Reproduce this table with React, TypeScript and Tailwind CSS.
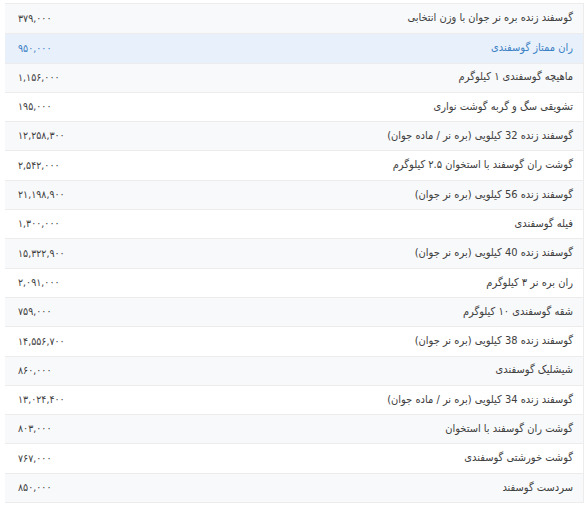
import React from "react";

const rows: [string, string][] = [
  ["گوسفند زنده بره نر جوان با وزن انتخابی", "۳۷۹,۰۰۰"],
  ["ران ممتاز گوسفندی", "۹۵۰,۰۰۰"],
  ["ماهیچه گوسفندی ۱ کیلوگرم", "۱,۱۵۶,۰۰۰"],
  ["تشویقی سگ و گربه گوشت نواری", "۱۹۵,۰۰۰"],
  ["گوسفند زنده 32 کیلویی (بره نر / ماده جوان)", "۱۲,۲۵۸,۳۰۰"],
  ["گوشت ران گوسفند با استخوان ۲.۵ کیلوگرم", "۲,۵۴۲,۰۰۰"],
  ["گوسفند زنده 56 کیلویی (بره نر جوان)", "۲۱,۱۹۸,۹۰۰"],
  ["فیله گوسفندی", "۱,۳۰۰,۰۰۰"],
  ["گوسفند زنده 40 کیلویی (بره نر جوان)", "۱۵,۳۲۲,۹۰۰"],
  ["ران بره نر ۳ کیلوگرم", "۲,۰۹۱,۰۰۰"],
  ["شقه گوسفندی ۱۰ کیلوگرم", "۷۵۹,۰۰۰"],
  ["گوسفند زنده 38 کیلویی (بره نر جوان)", "۱۴,۵۵۶,۷۰۰"],
  ["شیشلیک گوسفندی", "۸۶۰,۰۰۰"],
  ["گوسفند زنده 34 کیلویی (بره نر / ماده جوان)", "۱۳,۰۲۴,۴۰۰"],
  ["گوشت ران گوسفند با استخوان", "۸۰۳,۰۰۰"],
  ["گوشت خورشتی گوسفندی", "۷۶۷,۰۰۰"],
  ["سردست گوسفند", "۸۵۰,۰۰۰"],
];

export default function App() {
  return (
    <div className="w-[585px] h-[507px] bg-white pt-[3px] pl-[5px] pr-[1px] overflow-hidden">
      <div
        dir="rtl"
        className="border-t border-r border-b border-[#ececec] text-[11px] text-[#3d3d3d]"
        style={{ fontFamily: '"DejaVu Sans Condensed", "DejaVu Sans", sans-serif' }}
      >
        {rows.map(([name, price], i) => {
          const hl = i === 1;
          const bg = hl ? "bg-[#e8f1fb]" : i % 2 === 0 ? "bg-[#f8f9fa]" : "bg-white";
          return (
            <div
              key={i}
              className={`flex items-center justify-between h-[29.3px] pr-[10px] pl-[13px] border-t border-[#ececec] first:border-t-0 ${bg} ${hl ? "text-[#3b7fc4]" : ""}`}
            >
              <span>{name}</span>
              <span className="text-[10.5px]">{price}</span>
            </div>
          );
        })}
      </div>
    </div>
  );
}
